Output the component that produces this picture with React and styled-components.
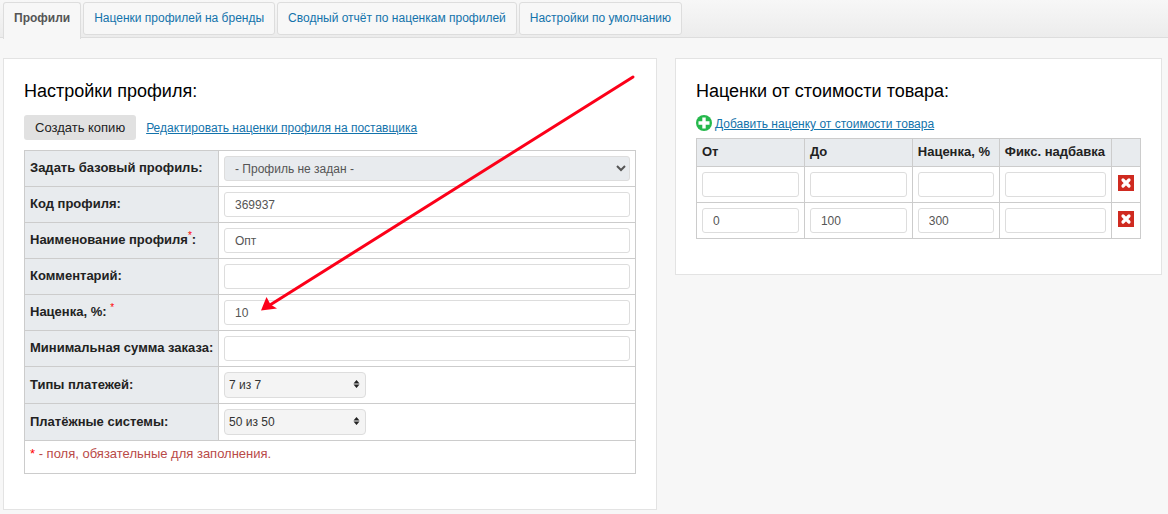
import { useState } from 'react';
import styled, { createGlobalStyle } from 'styled-components';

const GlobalStyles = createGlobalStyle`
  *, *::before, *::after {
    box-sizing: border-box;
  }
  body {
    margin: 0;
    background: #f7f7f7;
    color: #222;
    font-family: 'Liberation Sans', Arial, sans-serif;
    font-size: 13px;
    line-height: 16px;
  }
  input, select, button {
    font-family: inherit;
  }
`;

const Tabs = styled.nav`
  display: flex;
  align-items: flex-start;
  gap: 2px;
  height: 38px;
  padding: 2px 3px 0;
  border-bottom: 1px solid #ddd;
  background: linear-gradient(#f7f7f7, #ececec);
`;

const Tab = styled.a`
  padding: 8px 10px;
  border: 1px solid #ddd;
  border-radius: 3px;
  background: #f7f7f7;
  color: #1373ab;
  font-size: 12px;
  line-height: 15px;
  text-decoration: none;
  white-space: nowrap;
  ${(props) =>
    props.$active &&
    `
    padding-bottom: 13px;
    border-bottom: 0;
    border-radius: 3px 3px 0 0;
    color: #555;
    font-weight: bold;
  `}
`;

const Columns = styled.main`
  display: grid;
  grid-template-columns: 47fr 35fr;
  align-items: start;
  gap: 18px;
  padding: 20px 6px 4px 3px;
`;

const Panel = styled.section`
  position: relative;
  padding: 20px 20px 35px;
  border: 1px solid #e3e3e3;
  background: #fff;
`;

const Title = styled.h2`
  margin: 0 0 12px;
  color: #000;
  font-size: 18px;
  font-weight: normal;
  line-height: 24px;
`;

const Actions = styled.div`
  display: flex;
  align-items: center;
  gap: 10px;
  margin-bottom: 10px;
`;

const CopyButton = styled.button`
  height: 25px;
  padding: 0 11px;
  border: 0;
  border-radius: 3px;
  background: #e1e1e1;
  color: #222;
  font-size: 13px;
`;

const Link = styled.a`
  color: #1373ab;
  font-size: 12px;
  text-decoration: underline;
`;

const AddRow = styled.div`
  display: flex;
  align-items: flex-end;
  gap: 3px;
  margin-bottom: 7px;
  line-height: 14px;
`;

const Table = styled.table`
  width: 100%;
  border-collapse: collapse;
  table-layout: fixed;
`;

const HeadCell = styled.th`
  padding: 4px 5px 6px;
  border: 1px solid #ccc;
  background: #e8ebee;
  font-weight: bold;
  line-height: 17px;
  text-align: left;
  white-space: nowrap;
`;

const Cell = styled.td`
  padding: 5px;
  border: 1px solid #ccc;
  line-height: 16px;
`;

const ActionCell = styled(Cell)`
  padding: 3px 5px 7px;
`;

const Required = styled.sup`
  color: red;
  font-size: 10px;
  font-weight: normal;
  line-height: 0;
`;

const Input = styled.input`
  display: block;
  width: 100%;
  height: 25px;
  padding: 1px 10px 0;
  border: 1px solid #ddd;
  border-radius: 3px;
  background: #fff;
  color: #555;
  font-size: 12px;
`;

const BaseSelect = styled.select`
  display: block;
  width: 100%;
  height: 25px;
  padding: 1px 0 0 6px;
  border: 1px solid #ddd;
  border-radius: 3px;
  background: #e8ebee;
  color: #555;
  font-size: 12px;
`;

const CountBox = styled.div`
  position: relative;
  width: 142px;
`;

const CountSelect = styled.select`
  display: block;
  appearance: none;
  width: 100%;
  height: 26px;
  padding: 0 20px 0 4px;
  border: 1px solid #ddd;
  border-radius: 4px;
  background: #f4f4f4;
  color: #333;
  font-size: 12px;
`;

const SortArrows = styled.svg`
  position: absolute;
  top: 8px;
  right: 6px;
  pointer-events: none;
`;

const Note = styled.td`
  height: 33px;
  padding: 5px;
  border: 1px solid #ccc;
  color: #b94a48;
  vertical-align: top;

  span {
    color: red;
  }
`;

const DeleteButton = styled.button`
  display: block;
  width: 16px;
  height: 16px;
  margin: 0 auto;
  padding: 0;
  border: 0;
  background: #cf2a20;
  cursor: pointer;

  svg {
    display: block;
  }
`;

const Pointer = styled.svg`
  position: absolute;
  top: 16px;
  right: 20px;
  pointer-events: none;
`;

const tabs = [
  'Профили',
  'Наценки профилей на бренды',
  'Сводный отчёт по наценкам профилей',
  'Настройки по умолчанию',
];

const fields = [
  { id: 'code', label: 'Код профиля:', value: '369937' },
  { id: 'name', label: 'Наименование профиля', after: ':', required: true, value: 'Опт' },
  { id: 'comment', label: 'Комментарий:', value: '' },
  { id: 'markup', label: 'Наценка, %: ', required: true, value: '10' },
  { id: 'minimum', label: 'Минимальная сумма заказа:', value: '' },
];

const counts = [
  { id: 'payments', label: 'Типы платежей:', value: '7 из 7' },
  { id: 'systems', label: 'Платёжные системы:', value: '50 из 50' },
];

const priceColumns = ['От', 'До', 'Наценка, %', 'Фикс. надбавка'];

function ProfileSettings() {
  return (
    <Panel>
      <Title>Настройки профиля:</Title>
      <Actions>
        <CopyButton type='button'>Создать копию</CopyButton>
        <Link href='#suppliers'>Редактировать наценки профиля на поставщика</Link>
      </Actions>
      <Table>
        <colgroup>
          <col style={{ width: 194 }} />
          <col />
        </colgroup>
        <tbody>
          <tr>
            <HeadCell scope='row'>
              <label htmlFor='base'>Задать базовый профиль:</label>
            </HeadCell>
            <Cell>
              <BaseSelect id='base'>
                <option>- Профиль не задан -</option>
              </BaseSelect>
            </Cell>
          </tr>
          {fields.map((field) => (
            <tr key={field.id}>
              <HeadCell scope='row'>
                <label htmlFor={field.id}>
                  {field.label}
                  {field.required && <Required>*</Required>}
                  {field.after}
                </label>
              </HeadCell>
              <Cell>
                <Input id={field.id} defaultValue={field.value} />
              </Cell>
            </tr>
          ))}
          {counts.map((count) => (
            <tr key={count.id}>
              <HeadCell scope='row'>
                <label htmlFor={count.id}>{count.label}</label>
              </HeadCell>
              <Cell>
                <CountBox>
                  <CountSelect id={count.id}>
                    <option>{count.value}</option>
                  </CountSelect>
                  <SortArrows width='7' height='8' viewBox='0 0 7 8'>
                    <path d='M3.5 0 6.5 3.500h-6zM3.5 8 6.5 4.500h-6z' fill='#222' />
                  </SortArrows>
                </CountBox>
              </Cell>
            </tr>
          ))}
          <tr>
            <Note colSpan={2}>
              <span>*</span> - поля, обязательные для заполнения.
            </Note>
          </tr>
        </tbody>
      </Table>
      <Pointer width='376' height='240' viewBox='0 0 376 240'>
        <path d='M373 2 10 230' stroke='#fc0019' strokeWidth='3' strokeLinecap='round' />
        <path d='M1 235.500 6.500 222 10.500 229.500 17 233.500z' fill='#fc0019' />
      </Pointer>
    </Panel>
  );
}

function PriceMarkups() {
  const [rows, setRows] = useState([
    { id: 1, values: ['', '', '', ''] },
    { id: 2, values: ['0', '100', '300', ''] },
  ]);

  return (
    <Panel>
      <Title>Наценки от стоимости товара:</Title>
      <AddRow>
        <svg width='16' height='16' viewBox='0 0 16 16'>
          <circle cx='8' cy='8' r='8' fill='#25b84c' />
          <path d='M8 2.500v11M2.500 8h11' stroke='#fff' strokeWidth='3.4' />
        </svg>
        <Link href='#add'>Добавить наценку от стоимости товара</Link>
      </AddRow>
      <Table>
        <colgroup>
          <col style={{ width: '24.3%' }} />
          <col style={{ width: '24.3%' }} />
          <col style={{ width: '19.6%' }} />
          <col style={{ width: '25.2%' }} />
          <col />
        </colgroup>
        <thead>
          <tr>
            {priceColumns.map((name) => (
              <HeadCell key={name} scope='col'>
                {name}
              </HeadCell>
            ))}
            <HeadCell as='td' />
          </tr>
        </thead>
        <tbody>
          {rows.map((row) => (
            <tr key={row.id}>
              {row.values.map((value, i) => (
                <Cell key={priceColumns[i]}>
                  <Input aria-label={priceColumns[i]} defaultValue={value} />
                </Cell>
              ))}
              <ActionCell>
                <DeleteButton
                  type='button'
                  aria-label='Удалить'
                  onClick={() => setRows(rows.filter((r) => r.id !== row.id))}
                >
                  <svg width='16' height='16' viewBox='0 0 16 16'>
                    <path
                      d='M5 5l6 6M11 5l-6 6'
                      stroke='#fff'
                      strokeWidth='3.2'
                      strokeLinecap='round'
                    />
                  </svg>
                </DeleteButton>
              </ActionCell>
            </tr>
          ))}
        </tbody>
      </Table>
    </Panel>
  );
}

export default function App() {
  return (
    <>
      <GlobalStyles />
      <Tabs>
        {tabs.map((tab, i) => (
          <Tab key={tab} href='#' $active={i === 0}>
            {tab}
          </Tab>
        ))}
      </Tabs>
      <Columns>
        <ProfileSettings />
        <PriceMarkups />
      </Columns>
    </>
  );
}
